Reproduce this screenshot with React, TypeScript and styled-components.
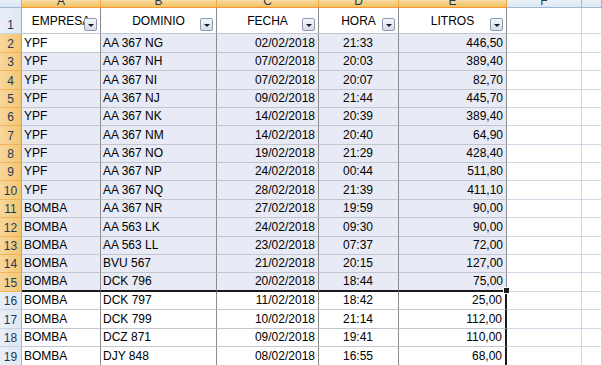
import React from "react";
import styled, { createGlobalStyle, css } from "styled-components";

const GlobalStyle = createGlobalStyle`
  html, body {
    margin: 0;
    padding: 0;
    background: #ffffff;
    overflow: hidden;
  }
`;

const COLS = "22px 79px 116px 102px 80px 108px 75px 20px";
const FONT = `"Liberation Sans", Arial, sans-serif`;

type Align = "left" | "right" | "center";

type Rec = [string, string, string, string, string];

const data: Rec[] = [
  ["YPF", "AA 367 NG", "02/02/2018", "21:33", "446,50"],
  ["YPF", "AA 367 NH", "07/02/2018", "20:03", "389,40"],
  ["YPF", "AA 367 NI", "07/02/2018", "20:07", "82,70"],
  ["YPF", "AA 367 NJ", "09/02/2018", "21:44", "445,70"],
  ["YPF", "AA 367 NK", "14/02/2018", "20:39", "389,40"],
  ["YPF", "AA 367 NM", "14/02/2018", "20:40", "64,90"],
  ["YPF", "AA 367 NO", "19/02/2018", "21:29", "428,40"],
  ["YPF", "AA 367 NP", "24/02/2018", "00:44", "511,80"],
  ["YPF", "AA 367 NQ", "28/02/2018", "21:39", "411,10"],
  ["BOMBA", "AA 367 NR", "27/02/2018", "19:59", "90,00"],
  ["BOMBA", "AA 563 LK", "24/02/2018", "09:30", "90,00"],
  ["BOMBA", "AA 563 LL", "23/02/2018", "07:37", "72,00"],
  ["BOMBA", "BVU 567", "21/02/2018", "20:15", "127,00"],
  ["BOMBA", "DCK 796", "20/02/2018", "18:44", "75,00"],
  ["BOMBA", "DCK 797", "11/02/2018", "18:42", "25,00"],
  ["BOMBA", "DCK 799", "10/02/2018", "21:14", "112,00"],
  ["BOMBA", "DCZ 871", "09/02/2018", "19:41", "110,00"],
  ["BOMBA", "DJY 848", "08/02/2018", "16:55", "68,00"],
];

const heights = [19, 18, 19, 18, 18, 19, 18, 18, 19, 18, 19, 18, 18, 19, 18, 19, 18, 19];
const aligns: Align[] = ["left", "left", "right", "center", "right"];
const headers = ["EMPRESA", "DOMINIO", "FECHA", "HORA", "LITROS"];
const letters = ["A", "B", "C", "D", "E", "F", ""];

const Sheet = styled.div`
  width: 602px;
  height: 365px;
  overflow: hidden;
  font-family: ${FONT};
  font-size: 12px;
  color: #000;
`;

const Row = styled.div<{ $h: number }>`
  display: grid;
  grid-template-columns: ${COLS};
  height: ${(p) => p.$h}px;
`;

const Corner = styled.div`
  box-sizing: border-box;
  background: linear-gradient(#e9eff8, #dbe5f2);
  border-right: 1px solid #9eb6ce;
  border-bottom: 1px solid #9eb6ce;
`;

const ColHead = styled.div<{ $sel?: boolean }>`
  box-sizing: border-box;
  overflow: hidden;
  text-align: center;
  font-size: 12px;
  line-height: 20px;
  color: #1e395b;
  border-right: 1px solid ${(p) => (p.$sel ? "#f2a240" : "#9eb6ce")};
  border-bottom: 1px solid ${(p) => (p.$sel ? "#f29536" : "#9eb6ce")};
  background: ${(p) =>
    p.$sel
      ? "linear-gradient(#f9dba4, #f1c15f)"
      : "linear-gradient(#eaf0f8, #dde7f4)"};
  span {
    display: block;
    margin-top: -9px;
  }
`;

const RowHead = styled.div<{ $sel?: boolean }>`
  box-sizing: border-box;
  display: flex;
  align-items: flex-end;
  justify-content: center;
  padding-bottom: 1px;
  font-size: 12px;
  color: #1e395b;
  border-right: 1px solid ${(p) => (p.$sel ? "#f29536" : "#9eb6ce")};
  border-bottom: 1px solid ${(p) => (p.$sel ? "#f2b45b" : "#c5d3e5")};
  background: ${(p) =>
    p.$sel
      ? "linear-gradient(90deg, #f8d79c, #f3c672)"
      : "linear-gradient(90deg, #e8eff8, #dfe8f4)"};
`;

const Cell = styled.div<{
  $align?: Align;
  $sel?: boolean;
  $tbl?: boolean;
  $thickBottom?: boolean;
  $thickRight?: boolean;
}>`
  position: relative;
  box-sizing: border-box;
  display: flex;
  align-items: flex-end;
  padding: 0 3px 2px 2px;
  white-space: nowrap;
  justify-content: ${(p) =>
    p.$align === "right" ? "flex-end" : p.$align === "center" ? "center" : "flex-start"};
  background: ${(p) => (p.$sel ? "#e8ebf5" : "#ffffff")};
  border-right: 1px solid ${(p) => (p.$tbl ? "#8c8c8c" : "#d0d7e5")};
  border-bottom: 1px solid ${(p) => (p.$tbl ? "#c2c6cf" : "#d0d7e5")};
  ${(p) =>
    p.$thickBottom &&
    css`
      border-bottom: 2px solid #1a1a1a;
    `}
  ${(p) =>
    p.$thickRight &&
    css`
      border-right: 2px solid #1a1a1a;
    `}
`;

const HeadCell = styled(Cell)`
  align-items: center;
  justify-content: center;
  padding: 0;
  overflow: visible;
`;

const FilterButton = styled.div`
  position: absolute;
  right: 3px;
  top: 10px;
  width: 13px;
  height: 13px;
  box-sizing: border-box;
  border: 1px solid #8a99b4;
  border-radius: 2px;
  background: linear-gradient(#f4f6fa, #d5dce8);
  display: flex;
  align-items: center;
  justify-content: center;
  &::after {
    content: "";
    border-left: 3px solid transparent;
    border-right: 3px solid transparent;
    border-top: 3px solid #1b1b1b;
    margin-top: 1px;
  }
`;

const FillHandle = styled.div`
  position: absolute;
  right: -4px;
  bottom: -4px;
  width: 5px;
  height: 5px;
  background: #1a1a1a;
  border: 1px solid #ffffff;
  z-index: 2;
`;

export default function App() {
  return (
    <Sheet>
      <GlobalStyle />
      <Row $h={8}>
        <Corner />
        {letters.map((l, i) => (
          <ColHead key={i} $sel={i < 5}>
            <span>{l}</span>
          </ColHead>
        ))}
      </Row>
      <Row $h={26}>
        <RowHead>1</RowHead>
        {headers.map((h) => (
          <HeadCell key={h} $tbl>
            {h}
            <FilterButton />
          </HeadCell>
        ))}
        <Cell />
        <Cell />
      </Row>
      {data.map((r, i) => {
        const n = i + 2;
        const sel = n <= 15;
        return (
          <Row key={n} $h={heights[i]}>
            <RowHead $sel={sel}>{n}</RowHead>
            {r.map((v, j) => (
              <Cell
                key={j}
                $align={aligns[j]}
                $tbl
                $sel={sel && n !== 2 ? true : sel && j > 0}
                $thickBottom={n === 15}
                $thickRight={n > 15 && j === 4}
              >
                {v}
                {n === 15 && j === 4 && <FillHandle />}
              </Cell>
            ))}
            <Cell />
            <Cell />
          </Row>
        );
      })}
    </Sheet>
  );
}
